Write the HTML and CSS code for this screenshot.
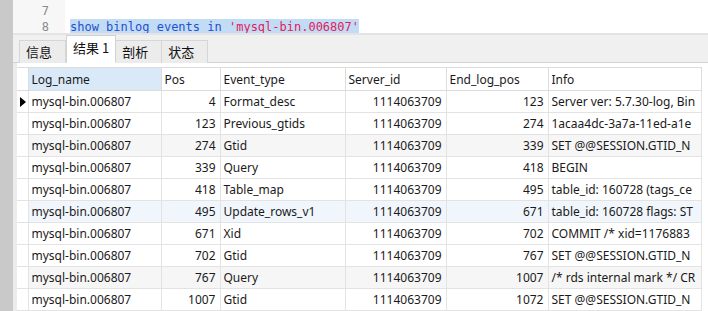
FILE: index.html
```html
<!DOCTYPE html>
<html lang="zh-CN">
  <head>
    <meta charset="UTF-8" />
    <meta name="viewport" content="width=device-width, initial-scale=1.0" />
    <title>binlog events</title>
    <link rel="stylesheet" href="styles.css">
  </head>
  <body>
    <div class="app">
      <div class="strip"></div>
      <div class="main">
        <div class="editor">
          <div class="gutter">
            <div class="ln">7</div>
            <div class="ln">8</div>
          </div>
          <div class="code">
            <div class="line"></div>
            <div class="line"><span class="sel"><span class="kw">show binlog events in</span> <span class="str">'mysql-bin.006807'</span></span><span class="caret"></span></div>
          </div>
        </div>

        <div class="tabbar">
          <div class="tab">信息</div>
          <div class="tab active">结果 1</div>
          <div class="tab">剖析</div>
          <div class="tab">状态</div>
        </div>

        <div class="grid-wrap">
          <table class="grid">
            <colgroup>
              <col class="c-ind" />
              <col class="c-name" />
              <col class="c-pos" />
              <col class="c-type" />
              <col class="c-sid" />
              <col class="c-end" />
              <col class="c-info" />
            </colgroup>
            <thead>
              <tr>
                <th class="ind"></th>
                <th class="sorted">Log_name</th>
                <th>Pos</th>
                <th>Event_type</th>
                <th>Server_id</th>
                <th>End_log_pos</th>
                <th>Info</th>
              </tr>
            </thead>
            <tbody>
              <tr>
                <td class="ind"><span class="arrow"></span></td>
                <td>mysql-bin.006807</td><td class="num">4</td><td>Format_desc</td>
                <td class="num">1114063709</td><td class="num">123</td><td>Server ver: 5.7.30-log, Bin</td>
              </tr>
              <tr>
                <td class="ind"></td>
                <td>mysql-bin.006807</td><td class="num">123</td><td>Previous_gtids</td>
                <td class="num">1114063709</td><td class="num">274</td><td>1acaa4dc-3a7a-11ed-a1e</td>
              </tr>
              <tr class="shade">
                <td class="ind"></td>
                <td>mysql-bin.006807</td><td class="num">274</td><td>Gtid</td>
                <td class="num">1114063709</td><td class="num">339</td><td>SET @@SESSION.GTID_N</td>
              </tr>
              <tr>
                <td class="ind"></td>
                <td>mysql-bin.006807</td><td class="num">339</td><td>Query</td>
                <td class="num">1114063709</td><td class="num">418</td><td>BEGIN</td>
              </tr>
              <tr>
                <td class="ind"></td>
                <td>mysql-bin.006807</td><td class="num">418</td><td>Table_map</td>
                <td class="num">1114063709</td><td class="num">495</td><td>table_id: 160728 (tags_ce</td>
              </tr>
              <tr class="hover">
                <td class="ind"></td>
                <td>mysql-bin.006807</td><td class="num">495</td><td>Update_rows_v1</td>
                <td class="num">1114063709</td><td class="num">671</td><td>table_id: 160728 flags: ST</td>
              </tr>
              <tr>
                <td class="ind"></td>
                <td>mysql-bin.006807</td><td class="num">671</td><td>Xid</td>
                <td class="num">1114063709</td><td class="num">702</td><td>COMMIT /* xid=1176883</td>
              </tr>
              <tr>
                <td class="ind"></td>
                <td>mysql-bin.006807</td><td class="num">702</td><td>Gtid</td>
                <td class="num">1114063709</td><td class="num">767</td><td>SET @@SESSION.GTID_N</td>
              </tr>
              <tr class="shade">
                <td class="ind"></td>
                <td>mysql-bin.006807</td><td class="num">767</td><td>Query</td>
                <td class="num">1114063709</td><td class="num">1007</td><td>/* rds internal mark */ CR</td>
              </tr>
              <tr>
                <td class="ind"></td>
                <td>mysql-bin.006807</td><td class="num">1007</td><td>Gtid</td>
                <td class="num">1114063709</td><td class="num">1072</td><td>SET @@SESSION.GTID_N</td>
              </tr>
            </tbody>
          </table>
        </div>
      </div>
    </div>
  </body>
</html>
```

FILE: styles.css
```css
body {
  margin: 0;
  width: 708px;
  height: 311px;
  overflow: hidden;
  background: #ffffff;
  font-family: "Noto Sans", "Noto Sans CJK SC", sans-serif;
  font-size: 12px;
  color: #1a1a1a;
}
.app {
  display: flex;
  height: 311px;
}
.strip {
  width: 13px;
  flex: none;
  background: #c9c9c9;
}
.main {
  flex: 1;
  display: flex;
  flex-direction: column;
  min-width: 0;
}

/* editor */
.editor {
  display: flex;
  height: 36px;
  overflow: hidden;
}
.gutter {
  width: 36px;
  padding: 3px 16px 0 0;
  background: #f7f7f7;
  text-align: right;
  font-family: "DejaVu Sans Mono", monospace;
  font-size: 12px;
  color: #8a8a8a;
}
.ln {
  height: 16px;
  line-height: 16px;
}
.code {
  padding: 3px 0 0 5px;
  font-family: "DejaVu Sans Mono", monospace;
  font-size: 12px;
}
.line {
  height: 16px;
  line-height: 16px;
  white-space: pre;
  position: relative;
}
.sel {
  background: #c2dcf5;
  display: inline-block;
  height: 16px;
}
.kw {
  color: #1f4fd0;
}
.str {
  color: #e0205a;
}
.caret {
  position: absolute;
  left: 0;
  top: 14px;
  width: 1px;
  height: 4px;
  background: #000;
}

/* result tabs */
.tabbar {
  display: flex;
  align-items: flex-end;
  height: 27px;
  padding-left: 6px;
  background: #f0f0f0;
  border-top: 2px solid #e4e4e4;
  border-bottom: 1px solid #d2d2d2;
}
.tab {
  height: 22px;
  line-height: 22px;
  padding: 0 6px;
  min-width: 33px;
  background: #ececec;
  border: 1px solid #d6d6d6;
  border-bottom: none;
  margin-bottom: -1px;
  font-family: "Noto Sans CJK SC", sans-serif;
  font-size: 13px;
  color: #111;
  text-align: left;
}
.tab + .tab {
  border-left: none;
}
.tab.active {
  height: 26px;
  line-height: 24px;
  background: #ffffff;
  border-color: #d2d2d2;
  border-left: 1px solid #d2d2d2;
  border-bottom: 1px solid #ffffff;
}
.tab.active + .tab {
  border-left: none;
}

/* grid */
.grid-wrap {
  flex: 1;
  padding: 4px 0 0 4px;
  background: linear-gradient(to right, #ececec 4px, #ffffff 4px);
}
.grid {
  border-collapse: collapse;
  table-layout: fixed;
  width: 684px;
  background: #ffffff;
}
.c-ind { width: 11px; }
.c-name { width: 133px; }
.c-pos { width: 59px; }
.c-type { width: 125px; }
.c-sid { width: 101px; }
.c-end { width: 102px; }
.c-info { width: 153px; }

.grid th,
.grid td {
  height: 21px;
  padding: 0 3px;
  border: 1px solid #e3e3e3;
  white-space: nowrap;
  overflow: hidden;
  text-align: left;
  font-weight: normal;
  line-height: 21px;
}
.grid th {
  height: 22px;
  color: #1a1a1a;
  border-color: #dcdcdc;
}
.grid th.sorted {
  background: #d9e9f8;
}
.grid .ind {
  padding: 0;
  border-left: none;
  position: relative;
}
.grid td.num {
  text-align: right;
  padding-right: 4px;
}
.grid tr.shade td {
  background: #f6f6f6;
}
.grid tr.hover td {
  background: #f1f6fc;
}
.grid tr.shade td.ind,
.grid tr.hover td.ind {
  background: #ffffff;
}
.arrow {
  position: absolute;
  left: 3px;
  top: 6px;
  width: 0;
  height: 0;
  border-top: 5px solid transparent;
  border-bottom: 5px solid transparent;
  border-left: 6px solid #000;
}
```
